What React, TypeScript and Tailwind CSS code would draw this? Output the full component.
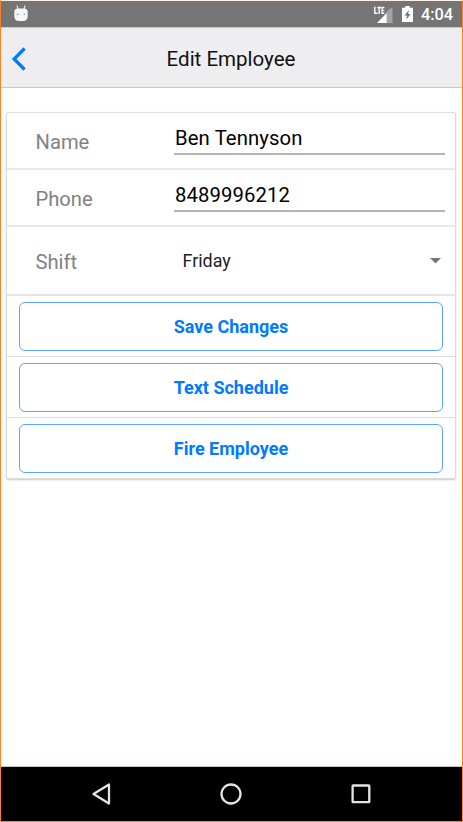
import React from "react";

function StatusBar() {
  return (
    <div className="flex h-[26px] items-center bg-[#757575] pl-[13px] pr-[9px] text-white">
      <svg width="14" height="17" viewBox="0 0 14 17" className="-mt-px">
        <path d="M3 0.5 L4 4 M11 0.5 L10 4" stroke="#fff" strokeWidth="1" />
        <path d="M0.3 7 Q0.3 3.5 4 3.5 H10 Q13.7 3.5 13.7 7 V11 Q13.7 16 9 16 H5 Q0.3 16 0.3 11 Z" fill="#f6f6f6" />
        <circle cx="3.7" cy="9.3" r="0.8" fill="#8a8a8a" />
        <circle cx="10.3" cy="9.3" r="0.8" fill="#8a8a8a" />
      </svg>
      <div className="flex-1" />
      <svg width="20" height="17" viewBox="0 0 20 17">
        <path d="M19.5 1 V17 H13.5 V5.5 Z" fill="#a3a3a3" />
        <path d="M13.7 7 V17 H4 Z" fill="#fff" />
        <path d="M1.8 0.8 V7.3 H4.6 M4.2 1.5 H8 M6.1 1.5 V8 M11.4 1.5 H9.1 V7.3 H11.4 M9.1 4.4 H11.2" fill="none" stroke="#fff" strokeWidth="1.4" />
      </svg>
      <svg width="11" height="16" viewBox="0 0 11 16" className="ml-[9px]">
        <path d="M3.3 0 H7.7 V1.7 H11 V16 H0 V1.7 H3.3 Z" fill="#fff" />
        <path d="M7 4 L2.4 9.6 H5 L4.2 13.5 L8.7 8 H6.1 Z" fill="#757575" />
      </svg>
      <span className="ml-[8px] w-[32px] whitespace-nowrap pt-[2px] text-[16.3px] font-medium leading-[26px]">4:04</span>
    </div>
  );
}

function Field({ label, value }: { label: string; value: string }) {
  return (
    <div className="flex h-[57px] border-b-2 border-[#e9e9e9] pl-[28.5px] pr-[10px]">
      <span className="w-[138.5px] pt-[14px] text-[20.2px] leading-[30px] text-[#828282]">{label}</span>
      <div className="h-[42px] flex-1 border-b-2 border-[#b4b4b4] pl-px pt-[10px] text-[20.3px] leading-[30px] tracking-[0.1px] text-black">
        {value}
      </div>
    </div>
  );
}

function Action({ label, last = false }: { label: string; last?: boolean }) {
  return (
    <div className={last ? "h-[60px] px-[12px] pt-[6px]" : "h-[61.3px] border-b border-[#dddddd] px-[12px] pt-[6px]"}>
      <button className="flex h-[49px] w-full items-center justify-center rounded-[6px] border border-[#5ca5ff] bg-white text-[18px] font-bold text-[#007aff]">
        {label}
      </button>
    </div>
  );
}

export default function App() {
  return (
    <div className="flex h-[822px] w-[463px] flex-col border border-[#ff8127] border-t-[#fbefe6] bg-white font-[Roboto,sans-serif]">
      <StatusBar />
      <header className="flex h-[61px] items-center border-y border-[#c8c7cc] bg-[#eeeef0] pl-[10px]">
        <svg width="16" height="24" viewBox="0 0 16 24" className="mt-[2px]">
          <path d="M13.6 1.5 L3.1 12 L13.6 22.5" fill="none" stroke="#007aff" strokeWidth="3.2" />
        </svg>
        <h1 className="mr-[27px] flex-1 pt-[2px] text-center text-[20.5px] leading-[30px] text-[#111111]">Edit Employee</h1>
      </header>
      <main className="flex-1 pl-[5px] pr-[6px] pt-[24px]">
        <section className="h-[367px] rounded-[2px] border border-[#dddddd] bg-white shadow-[0_1px_2px_rgba(0,0,0,0.22)]">
          <Field label="Name" value="Ben Tennyson" />
          <Field label="Phone" value="8489996212" />
          <div className="flex h-[68.6px] items-center border-b-2 border-[#e6e6e6] pl-[28.5px] pr-[14px]">
            <span className="w-[147px] pt-[3px] text-[20.2px] text-[#828282]">Shift</span>
            <span className="flex-1 pt-[3px] text-[17.9px] text-[#222222]">Friday</span>
            <svg width="11" height="6" viewBox="0 0 11 6" className="mt-px">
              <path d="M0 0 H11 L5.5 5.5 Z" fill="#757575" />
            </svg>
          </div>
          <Action label="Save Changes" />
          <Action label="Text Schedule" />
          <Action label="Fire Employee" last />
        </section>
      </main>
      <nav className="flex h-[55px] items-center border-t border-[#c5cac8] bg-black pl-[90px]">
        <svg width="22" height="22" viewBox="0 0 22 22">
          <path d="M18 1.5 V20.5 L2.5 11 Z" fill="none" stroke="#e4e4e4" strokeWidth="2.3" strokeLinejoin="round" />
        </svg>
        <svg width="22" height="22" viewBox="0 0 22 22" className="ml-[107px]">
          <circle cx="11" cy="11" r="9.5" fill="none" stroke="#e4e4e4" strokeWidth="2.3" />
        </svg>
        <svg width="20" height="20" viewBox="0 0 20 20" className="ml-[109px]">
          <rect x="1.6" y="1.5" width="16.7" height="16.7" rx="0.5" fill="none" stroke="#e4e4e4" strokeWidth="2.3" />
        </svg>
      </nav>
    </div>
  );
}
